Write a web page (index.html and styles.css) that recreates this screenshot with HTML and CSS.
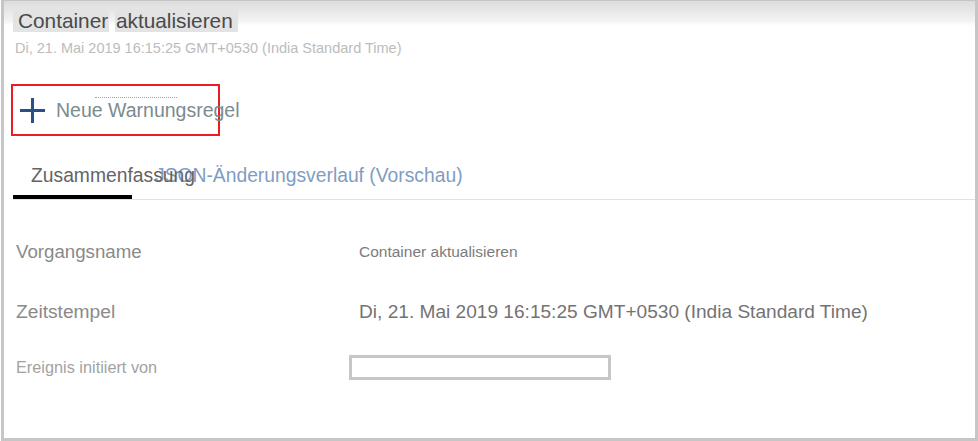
FILE: index.html
```html
<!DOCTYPE html>
<html lang="de">
<head>
    <meta charset="UTF-8">
    <meta name="viewport" content="width=device-width, initial-scale=1.0">
    <title>Container aktualisieren</title>
    <link rel="stylesheet" href="styles.css">
</head>
<body>
    <div class="panel">
        <header class="panel-head">
            <h1 class="title"><span class="hl hl-first">Container</span> <span class="hl hl-last">aktualisieren</span></h1>
            <p class="subtitle">Di, 21. Mai 2019 16:15:25 GMT+0530 (India Standard Time)</p>
        </header>

        <a href="#" class="new-rule">
            <svg class="plus" width="25" height="25" viewBox="0 0 25 25" aria-hidden="true">
                <path d="M12.5 0 V25 M0 12.5 H25" stroke="#2a4f8a" stroke-width="3" fill="none"/>
            </svg>
            <span class="new-rule-label">Neue Warnungsregel</span>
            <span class="hint-line"></span>
        </a>

        <nav class="tabs">
            <a href="#" class="tab active">Zusammenfassung</a>
            <a href="#" class="tab tab-json">JSON-Änderungsverlauf (Vorschau)</a>
        </nav>

        <div class="details">
            <div class="row">
                <div class="label label-lg">Vorgangsname</div>
                <div class="value value-sm">Container aktualisieren</div>
            </div>
            <div class="row">
                <div class="label label-xl">Zeitstempel</div>
                <div class="value value-lg">Di, 21. Mai 2019 16:15:25 GMT+0530 (India Standard Time)</div>
            </div>
            <div class="row row-last">
                <div class="label label-sm">Ereignis initiiert von</div>
                <div class="value"><div class="empty-field"></div></div>
            </div>
        </div>
    </div>
</body>
</html>
```

FILE: styles.css
```css
* {
    box-sizing: border-box;
    margin: 0;
    padding: 0;
}
html, body {
    height: 100%;
    overflow: hidden;
}
body {
    font-family: 'Liberation Sans', Arial, sans-serif;
    background-color: #fff;
    color: #555;
}
a {
    text-decoration: none;
}
.panel {
    margin-left: 1px;
    width: 977px;
    height: 441px;
    border: 3px solid #c6c6c6;
    border-top: 1px solid #c4c4c4;
    background: linear-gradient(to bottom, #dcdcdc 0, #f3f3f3 20px, #fbfbfb 23px, #fff 25px);
    padding-left: 9px;
}
.panel-head {
    padding-top: 8px;
}
.title {
    font-size: 20.8px;
    font-weight: normal;
    line-height: 23px;
    color: #4a4a4a;
    white-space: nowrap;
}
.hl {
    background-color: #e3e3e3;
}
.hl-first {
    padding: 0 1px 0 5px;
}
.hl-last {
    padding: 0 5px 0 1px;
}
.subtitle {
    margin: 7px 0 0 2px;
    font-size: 14.5px;
    line-height: 18px;
    color: #bcbcbc;
    white-space: nowrap;
}
.new-rule {
    position: relative;
    display: flex;
    align-items: center;
    width: 209px;
    height: 52px;
    margin: 27px 0 0 -2px;
    padding-left: 7px;
    border: 2px solid #ec1c24;
    white-space: nowrap;
}
.plus {
    flex: none;
    display: block;
}
.new-rule-label {
    margin-left: 11px;
    font-size: 19.5px;
    color: #7b8b8f;
}
.hint-line {
    position: absolute;
    top: 11px;
    left: 82px;
    width: 82px;
    border-top: 1px dotted #5bb8d6;
}
.tabs {
    display: flex;
    margin-top: 29px;
    border-bottom: 1px solid #e2e2e2;
}
.tab {
    display: block;
    font-size: 19.3px;
    line-height: 22px;
    padding-bottom: 8px;
    white-space: nowrap;
}
.tab.active {
    position: relative;
    z-index: 1;
    width: 119px;
    padding-left: 18px;
    color: #646464;
    border-bottom: 4px solid #000;
}
.tab-json {
    padding-left: 23px;
    color: #7f9dc1;
}
.details {
    margin-top: 22px;
}
.row {
    display: grid;
    grid-template-columns: 346px 1fr;
    align-items: center;
    height: 60px;
}
.row-last {
    height: 50px;
}
.label {
    padding-left: 3px;
    color: #8a8a8a;
    white-space: nowrap;
}
.label-lg {
    font-size: 18.7px;
}
.label-xl {
    font-size: 19.2px;
}
.label-sm {
    font-size: 16.3px;
    color: #a2a2a2;
}
.value {
    white-space: nowrap;
    color: #737373;
}
.value-sm {
    font-size: 15.5px;
    color: #7c7c7c;
}
.value-lg {
    font-size: 19.1px;
}
.empty-field {
    width: 262px;
    height: 25px;
    margin-left: -10px;
    border: 3px solid #c6c6c6;
    background-color: #fff;
}
```
